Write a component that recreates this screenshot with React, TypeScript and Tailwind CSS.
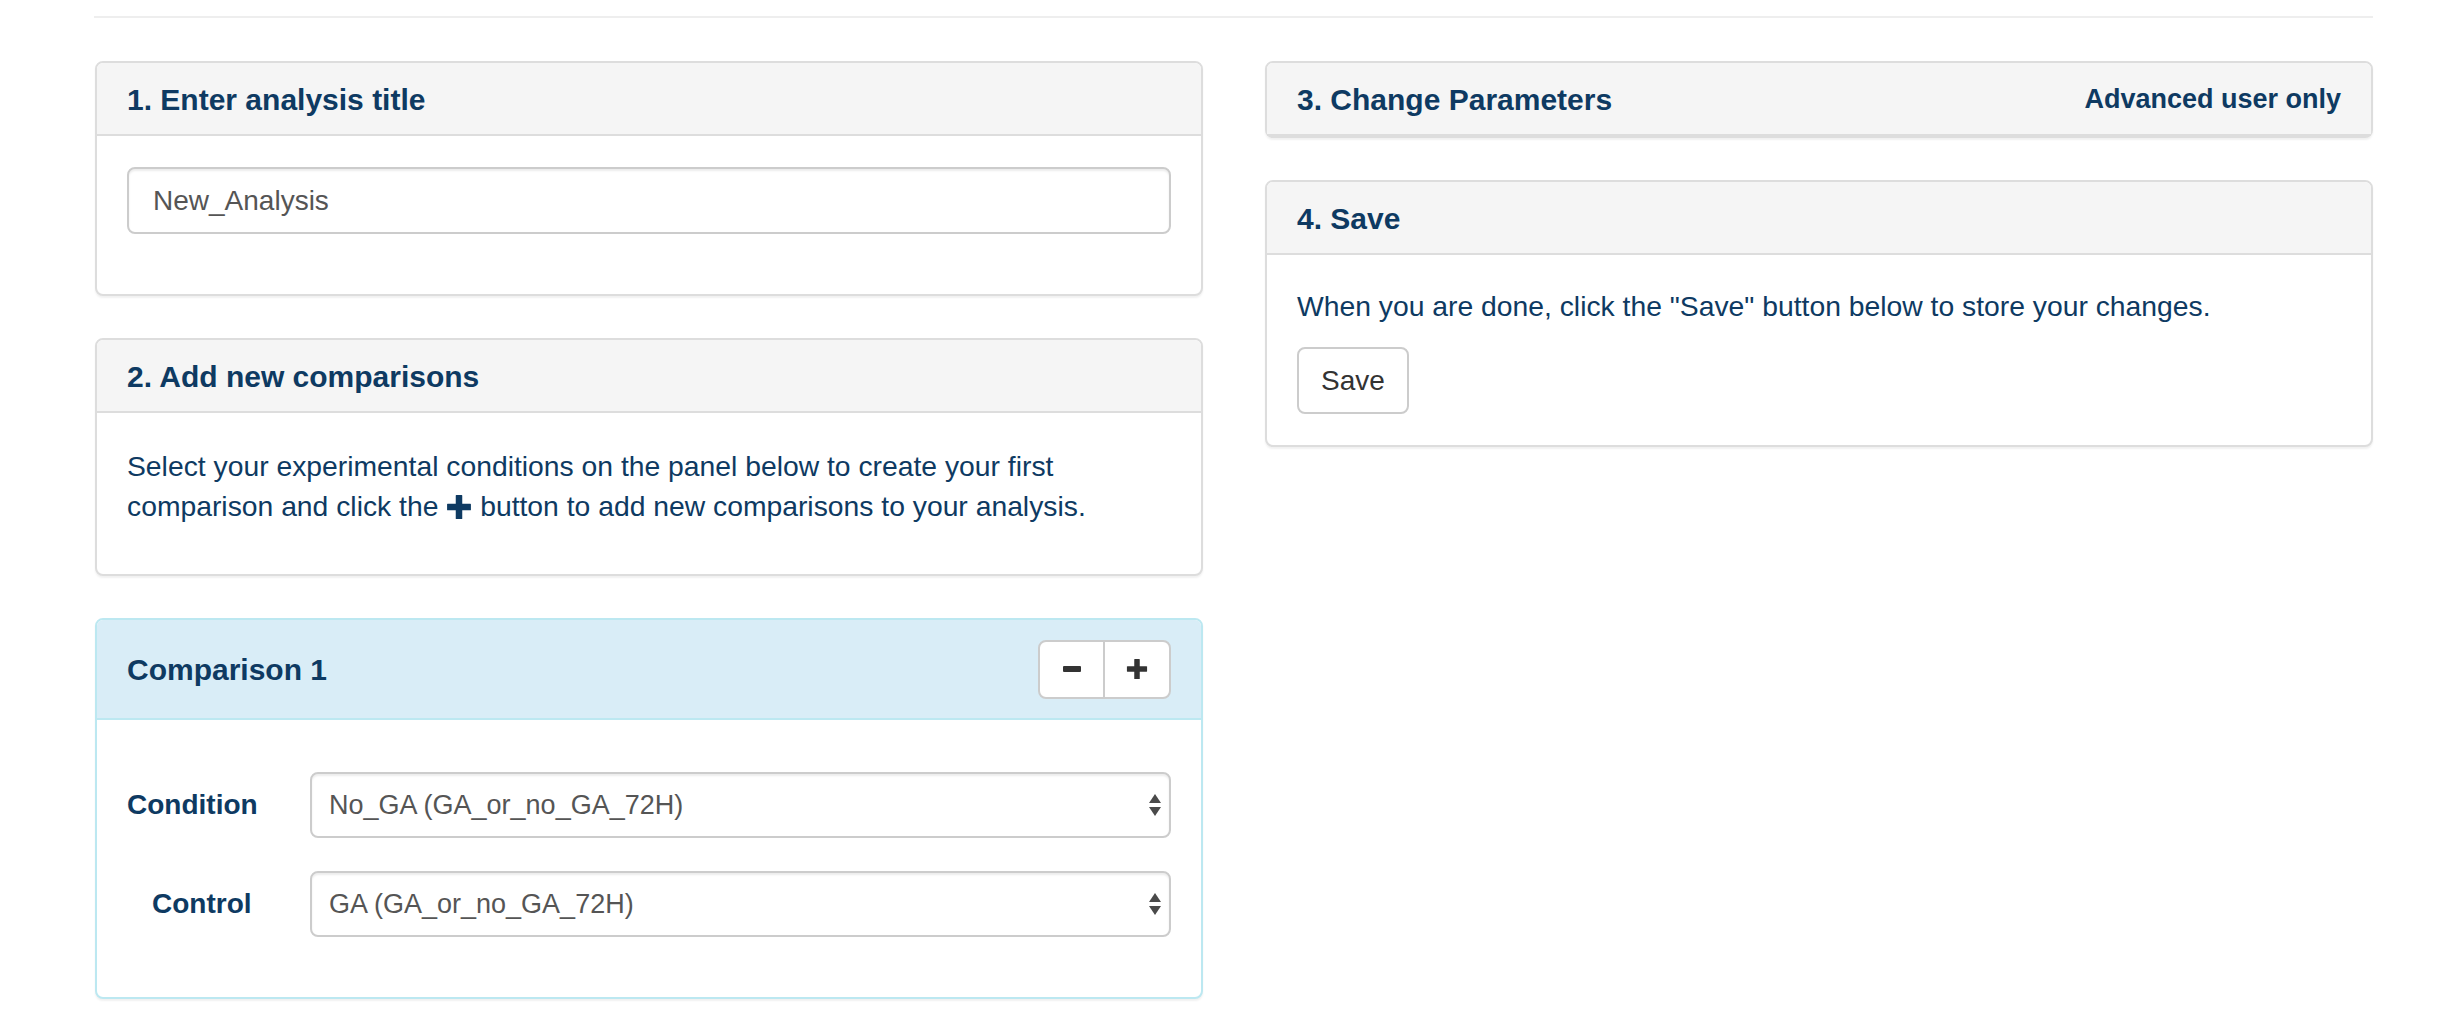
import React from 'react'

const NAVY = 'text-[#0e3a62]'

function Panel({ children }: { children: React.ReactNode }) {
  return (
    <div className="rounded-[8px] border-2 border-[#ddd] bg-white shadow-[0_2px_2px_rgba(0,0,0,0.06)]">
      {children}
    </div>
  )
}

function PanelHeading({ title, right }: { title: string; right?: React.ReactNode }) {
  return (
    <div className="flex h-[73px] items-center justify-between rounded-t-[6px] border-b-2 border-[#ddd] bg-[#f5f5f5] px-[30px]">
      <h3 className="pt-[2px] text-[30px] leading-none font-bold">{title}</h3>
      {right}
    </div>
  )
}

function PlusGlyph({ className }: { className?: string }) {
  return (
    <svg className={className} viewBox="0 0 24 24" fill="currentColor">
      <rect x="9" y="1" width="6" height="22" rx="0.5" />
      <rect x="1" y="9" width="22" height="6" rx="0.5" />
    </svg>
  )
}

function SelectBox({ value }: { value: string }) {
  return (
    <div className="relative h-[66px] flex-1">
      <select
        defaultValue={value}
        className="h-full w-full appearance-none rounded-[8px] border-2 border-[#ccc] bg-white pl-[17px] pr-[50px] text-[27px] text-[#555] shadow-[inset_0_2px_2px_rgba(0,0,0,0.075)] outline-none"
      >
        <option>{value}</option>
      </select>
      <svg className="pointer-events-none absolute right-[9px] top-[21px] h-[24px] w-[14px] text-[#4a4a4a]" viewBox="0 0 14 24" fill="currentColor">
        <path d="M7 1 L13 10 L1 10 Z" />
        <path d="M1 14 L13 14 L7 23 Z" />
      </svg>
    </div>
  )
}

export default function App() {
  return (
    <div className={`min-h-screen bg-white font-['Liberation_Sans',Arial,sans-serif] ${NAVY}`}>
      <div className="pl-[94px] pr-[83px] pt-[16px]">
        <div className="h-[2px] bg-[#eee]" />
      </div>

      <div className="mt-[43px] grid grid-cols-[1108px_1108px] gap-x-[62px] pl-[95px]">
        {/* Left column */}
        <div className="flex flex-col gap-[42px]">
          <Panel>
            <PanelHeading title="1. Enter analysis title" />
            <div className="px-[30px] pt-[31px] pb-[60px]">
              <input
                type="text"
                defaultValue="New_Analysis"
                className="h-[67px] w-full rounded-[8px] border-2 border-[#ccc] bg-white px-[24px] text-[28px] text-[#555] shadow-[inset_0_2px_2px_rgba(0,0,0,0.075)] outline-none"
              />
            </div>
          </Panel>

          <Panel>
            <PanelHeading title="2. Add new comparisons" />
            <div className="px-[30px] pt-[33px] pb-[48px] text-[28.3px] leading-[40px]">
              <p>
                Select your experimental conditions on the panel below to create your first
                <br />
                comparison and click the{' '}
                <PlusGlyph className="inline-block h-[26px] w-[26px] -translate-y-[2px] align-middle" />{' '}
                button to add new comparisons to your analysis.
              </p>
            </div>
          </Panel>

          <div className="rounded-[8px] border-2 border-[#bce8f1] bg-white shadow-[0_2px_2px_rgba(0,0,0,0.06)]">
            <div className="flex h-[100px] items-center justify-between rounded-t-[6px] border-b-2 border-[#bce8f1] bg-[#d9edf7] px-[30px]">
              <h3 className="pt-[2px] text-[30px] leading-none font-bold">Comparison 1</h3>
              <div className="flex h-[59px]">
                <button className="flex w-[67px] items-center justify-center rounded-l-[8px] border-2 border-[#ccc] bg-white text-[#333]">
                  <svg className="h-[6px] w-[18px]" viewBox="0 0 18 6" fill="currentColor">
                    <rect x="0" y="0" width="18" height="6" rx="1" />
                  </svg>
                </button>
                <button className="-ml-[2px] flex w-[68px] items-center justify-center rounded-r-[8px] border-2 border-[#ccc] bg-white text-[#333]">
                  <PlusGlyph className="h-[22px] w-[22px]" />
                </button>
              </div>
            </div>
            <div className="flex flex-col gap-[33px] px-[30px] pt-[52px] pb-[60px]">
              <div className="flex items-center">
                <label className="w-[183px] text-[28px] font-bold">Condition</label>
                <SelectBox value="No_GA (GA_or_no_GA_72H)" />
              </div>
              <div className="flex items-center">
                <label className="w-[183px] pl-[25px] text-[28px] font-bold">Control</label>
                <SelectBox value="GA (GA_or_no_GA_72H)" />
              </div>
            </div>
          </div>
        </div>

        {/* Right column */}
        <div className="flex flex-col gap-[42px]">
          <Panel>
            <PanelHeading
              title="3. Change Parameters"
              right={<span className="pt-[2px] text-[27px] leading-none font-bold">Advanced user only</span>}
            />
          </Panel>

          <Panel>
            <PanelHeading title="4. Save" />
            <div className="px-[30px] pt-[31px] pb-[31px] text-[28.3px] leading-[40px]">
              <p>When you are done, click the "Save" button below to store your changes.</p>
              <button className="mt-[21px] h-[67px] rounded-[8px] border-2 border-[#ccc] bg-white px-[22px] text-[28px] text-[#333]">
                Save
              </button>
            </div>
          </Panel>
        </div>
      </div>
    </div>
  )
}
